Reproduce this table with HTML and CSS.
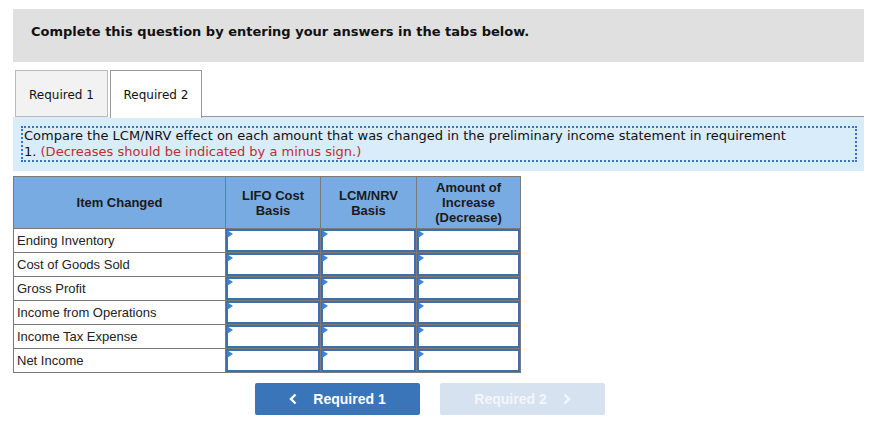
FILE: index.html
```html
<!DOCTYPE html>
<html>
<head>
<meta charset="utf-8">
<link rel="stylesheet" href="styles.css">
</head>
<body>
<div class="page">
  <div class="banner">Complete this question by entering your answers in the tabs below.</div>
  <div class="tabs">
    <div class="tab">Required 1</div>
    <div class="tab active">Required 2</div>
    <div class="tab-fill"></div>
  </div>
  <div class="panel">
    <div class="prompt">Compare the LCM/NRV effect on each amount that was changed in the preliminary income statement in requirement<br>1. <span class="note">(Decreases should be indicated by a minus sign.)</span></div>
  </div>
  <table class="grid">
    <thead>
      <tr>
        <th class="c1">Item Changed</th>
        <th class="c2">LIFO Cost<br>Basis</th>
        <th class="c3">LCM/NRV<br>Basis</th>
        <th class="c4">Amount of<br>Increase<br>(Decrease)</th>
      </tr>
    </thead>
    <tbody>
      <tr><td class="label">Ending Inventory</td><td class="in"><div class="box"></div></td><td class="in"><div class="box"></div></td><td class="in"><div class="box"></div></td></tr>
      <tr><td class="label">Cost of Goods Sold</td><td class="in"><div class="box"></div></td><td class="in"><div class="box"></div></td><td class="in"><div class="box"></div></td></tr>
      <tr><td class="label">Gross Profit</td><td class="in"><div class="box"></div></td><td class="in"><div class="box"></div></td><td class="in"><div class="box"></div></td></tr>
      <tr><td class="label">Income from Operations</td><td class="in"><div class="box"></div></td><td class="in"><div class="box"></div></td><td class="in"><div class="box"></div></td></tr>
      <tr><td class="label">Income Tax Expense</td><td class="in"><div class="box"></div></td><td class="in"><div class="box"></div></td><td class="in"><div class="box"></div></td></tr>
      <tr><td class="label">Net Income</td><td class="in"><div class="box"></div></td><td class="in"><div class="box"></div></td><td class="in"><div class="box"></div></td></tr>
    </tbody>
  </table>
  <div class="nav">
    <div class="btn prev"><svg class="chev left" width="8" height="12" viewBox="0 0 8 12"><path d="M6.5 1.5 L2 6 L6.5 10.5" fill="none" stroke="currentColor" stroke-width="2.4"/></svg>Required 1</div>
    <div class="btn next">Required 2<svg class="chev right" width="8" height="12" viewBox="0 0 8 12"><path d="M1.5 1.5 L6 6 L1.5 10.5" fill="none" stroke="currentColor" stroke-width="2.4"/></svg></div>
  </div>
</div>
</body>
</html>
```
FILE: styles.css
```css
html, body { margin: 0; padding: 0; background: #fff; }
.page { width: 851px; margin-left: 13px; padding-top: 9px; font-family: "DejaVu Sans", Verdana, sans-serif; color: #111; }
.banner { background: #e0e0e0; height: 53px; box-sizing: border-box; padding: 15px 0 0 18px; font-size: 13px; font-weight: bold; line-height: 16px; }
.tabs { display: flex; align-items: flex-end; height: 47px; margin-top: 8px; }
.tab { width: 93px; height: 47px; box-sizing: border-box; border: 1px solid #bbb; background: #f2f2f2; font-size: 12px; line-height: 48px; text-align: center; margin-left: 2px; color: #111; }
.tab.active { width: 92px; background: #fff; border: 1px solid #999; border-bottom: none; margin-left: 2px; height: 48px; line-height: 49px; position: relative; top: 1px; }
.tab-fill { flex: 1; height: 47px; box-sizing: border-box; border-bottom: 1px solid #999; }
.panel { background: #d9ecf9; padding: 9px 7px 9px 8px; }
.prompt { border: 2px dotted #3a72c2; font-size: 13px; line-height: 16px; padding: 0 0 0 1px; color: #111; }
.note { color: #bf2d35; }
.grid { border-collapse: collapse; margin-top: 5px; font-family: "Liberation Sans", Arial, sans-serif; font-size: 13px; }
.grid th { background: #79abe3; border: 1px solid #7a7a7a; height: 51px; padding: 0; font-weight: bold; line-height: 15px; color: #1a1a1a; }
.c1 { width: 211px; }
.c2 { width: 94px; }
.c3 { width: 95px; }
.c4 { width: 103px; }
.grid td { border: 1px solid #7a7a7a; height: 23px; padding: 0; }
.label { padding-left: 3px !important; color: #222; }
.in { position: relative; }
.box { height: 23px; box-sizing: border-box; border: 2px solid #3f6fa8; background: #fff; }
.in::before { content: ""; position: absolute; left: 1px; top: 1px; border-left: 6px solid #3d80d8; border-top: 4px solid transparent; border-bottom: 4px solid transparent; }
.nav { display: flex; gap: 20px; margin: 10px 0 0 242px; font-family: "Liberation Sans", Arial, sans-serif; }
.btn { width: 165px; height: 32px; box-sizing: border-box; border-radius: 2px; display: flex; align-items: center; justify-content: center; font-size: 14px; font-weight: bold; }
.prev { background: #3975b8; color: #fff; }
.next { background: #d7e2f0; color: #f3f6fb; }
.chev { display: block; }
.chev.left { margin-right: 16px; }
.chev.right { margin-left: 16px; }
```
